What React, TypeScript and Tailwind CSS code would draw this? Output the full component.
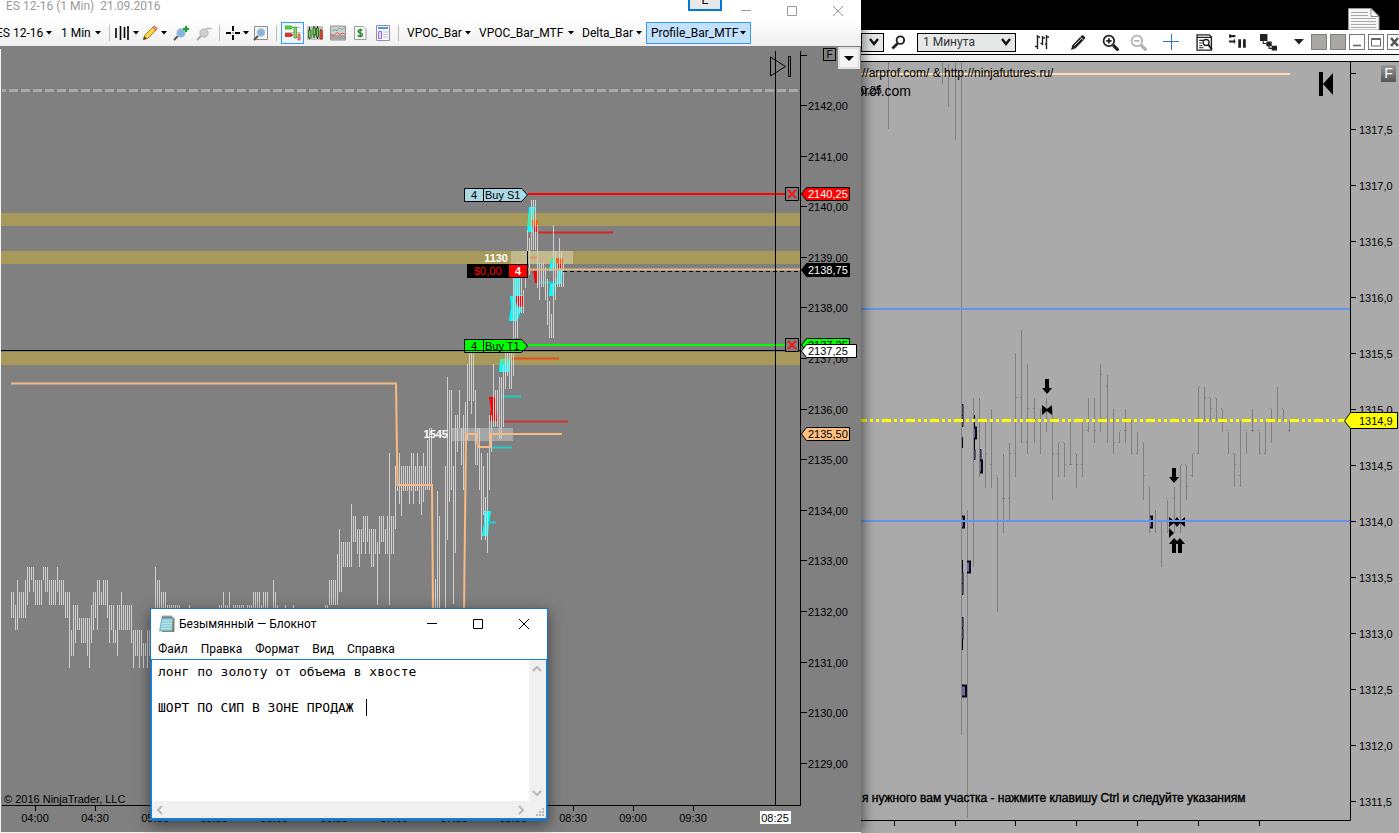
import React from 'react';

type Bar = [number, number, number];

const UI_FONT = "font-['Roboto','Open_Sans',sans-serif]";
const CHART_FONT = "font-['Liberation_Sans',Arial,sans-serif]";

// ES bars before the rally, as tick levels: [x, high, low], one level = a quarter point
const esLevels: Bar[] = [
  [11, 2, 4], [13, 2, 4], [15, 3, 5], [17, 1, 5], [19, 2, 4], [21, 2, 4], [23, 2, 4], [25, 1, 4],
  [27, 0, 3], [29, 0, 2], [31, 0, 1], [33, 0, 2], [35, 1, 3], [37, 1, 3], [39, 1, 3], [41, 1, 3],
  [43, 0, 1], [45, 0, 2], [47, 0, 2], [49, 1, 3], [51, 1, 3], [53, 1, 3], [55, 1, 3], [57, 0, 2],
  [59, 1, 3], [61, 1, 3], [63, 1, 3], [65, 2, 4], [67, 2, 4], [69, 2, 8], [71, 5, 7], [73, 3, 7],
  [75, 3, 6], [77, 3, 5], [79, 4, 5], [81, 4, 6], [83, 4, 6], [85, 4, 6], [87, 4, 7], [89, 4, 8],
  [91, 3, 6], [93, 2, 5], [95, 2, 4], [97, 1, 5], [99, 1, 3], [101, 2, 3], [103, 1, 3], [105, 1, 3],
  [107, 1, 4], [109, 3, 6], [111, 3, 5], [113, 3, 6], [115, 5, 6], [117, 3, 7], [119, 3, 5], [121, 2, 5],
  [123, 3, 5], [125, 3, 5], [127, 3, 5], [129, 3, 5], [131, 3, 6], [133, 5, 8], [135, 5, 7], [137, 5, 7],
  [139, 5, 8], [141, 5, 7], [143, 6, 8], [145, 6, 7], [147, 5, 8], [149, 5, 7], [155, 0, 4], [157, 1, 4],
  [159, 1, 4], [161, 2, 4], [163, 2, 4], [165, 2, 4], [167, 3, 4], [169, 3, 4], [171, 3, 4], [173, 3, 4],
  [175, 3, 4], [177, 3, 4], [179, 3, 4], [189, 3, 4], [219, 3, 4], [221, 3, 4], [223, 2, 4], [225, 3, 4],
  [227, 3, 4], [229, 2, 4], [233, 3, 4], [235, 3, 4], [237, 3, 4], [239, 3, 4], [241, 3, 4], [243, 3, 4],
  [247, 3, 4], [249, 3, 4], [251, 3, 4], [253, 2, 4], [255, 2, 4], [257, 2, 4], [259, 2, 4], [261, 3, 4],
  [263, 2, 4], [265, 2, 4], [267, 2, 4], [273, 1, 4], [275, 2, 4], [277, 3, 4], [285, 3, 4], [293, 3, 4],
  [325, 3, 4], [327, 3, 4], [329, 1, 3], [331, 1, 3], [333, 1, 3], [335, 1, 3], [337, -1, 3], [339, -3, 2],
  [341, -2, 2], [343, -2, 0], [345, -2, 0], [347, -2, 0], [349, -2, 0], [351, -5, 0], [353, -4, -2], [355, -4, -2],
  [357, -3, -1], [359, -3, 0], [361, -3, -1], [363, -4, -2], [365, -4, -1], [367, -4, -2], [369, -3, -1], [371, -3, 0],
  [373, -3, 0], [375, -3, -1], [377, -2, 3], [379, -4, -1], [381, -4, -2], [383, -4, -2], [385, -3, -1], [387, -4, -1],
  [389, -9, 3], [391, -4, -1], [393, -4, -1], [395, -8, -3], [397, -8, -6], [399, -9, -5], [401, -8, -4], [403, -8, -6],
  [405, -8, -6], [407, -8, -6], [409, -8, -5], [411, -9, -6], [413, -9, -5], [415, -8, -6], [417, -9, -6], [419, -8, -5],
];

// bars of the rally itself, in chart pixels
const esBars: Bar[] = [
  [421, 466, 515], [423, 453, 502], [425, 466, 490], [427, 440, 490], [429, 428, 490], [431, 428, 490], [433, 592, 612], [435, 579, 612],
  [437, 491, 612], [439, 516, 612], [445, 466, 612], [447, 377, 540], [449, 390, 502], [451, 390, 490], [453, 466, 604], [455, 415, 553],
  [457, 415, 452], [459, 390, 428], [461, 428, 465], [463, 415, 490], [465, 402, 437], [467, 364, 440], [469, 353, 401], [471, 353, 414],
  [473, 353, 401], [475, 390, 465], [477, 428, 465], [479, 428, 490], [481, 453, 540], [483, 466, 515], [485, 497, 540], [487, 453, 553],
  [489, 415, 490], [491, 415, 452], [493, 364, 427], [495, 390, 427], [497, 390, 427], [499, 377, 439], [501, 377, 439], [503, 365, 427],
  [505, 353, 389], [507, 353, 376], [509, 352, 389], [511, 352, 389], [513, 278, 376], [515, 278, 338], [517, 263, 338], [519, 265, 313],
  [521, 275, 313], [523, 290, 313], [525, 263, 288], [527, 230, 267], [529, 238, 275], [531, 200, 250], [533, 200, 250], [535, 200, 250],
  [537, 225, 288], [539, 263, 300], [541, 263, 287], [543, 263, 287], [545, 267, 300], [547, 279, 325], [549, 301, 338], [551, 314, 338],
  [553, 225, 338], [555, 251, 300], [557, 263, 287], [559, 238, 287], [561, 251, 287], [563, 263, 287],
];

const gcBars: Bar[] = [
  [888, 62, 129], [942, 62, 84], [948, 64, 107], [955, 62, 140], [961, 62, 735], [967, 510, 818], [973, 398, 567], [979, 398, 477],
  [985, 422, 488], [991, 409, 488], [997, 477, 612], [1003, 454, 533], [1009, 443, 520], [1015, 353, 477], [1021, 330, 443], [1027, 364, 454],
  [1034, 398, 443], [1040, 409, 454], [1046, 398, 432], [1052, 409, 500], [1058, 443, 477], [1064, 443, 477], [1070, 421, 465], [1076, 454, 488],
  [1082, 421, 477], [1088, 398, 432], [1094, 398, 443], [1100, 364, 432], [1107, 375, 443], [1113, 409, 454], [1119, 432, 443], [1125, 409, 443],
  [1131, 420, 454], [1137, 432, 454], [1143, 443, 500], [1149, 487, 533], [1155, 510, 533], [1161, 521, 567], [1167, 500, 533], [1174, 487, 533],
  [1180, 465, 533], [1186, 465, 500], [1192, 454, 477], [1198, 387, 454], [1204, 387, 421], [1210, 398, 421], [1216, 398, 421], [1222, 409, 432],
  [1228, 432, 454], [1234, 454, 487], [1240, 421, 487], [1246, 432, 454], [1252, 409, 432], [1259, 432, 454], [1265, 421, 454], [1271, 409, 443],
  [1277, 387, 421], [1283, 409, 421], [1289, 421, 432],
];

// open and close stubs of the gold bars: [x, y]
const gcOpens = [
  [991, 465], [997, 476], [1003, 499], [1009, 499], [1015, 454], [1021, 398], [1027, 443], [1034, 409], [1040, 420], [1058, 454],
  [1064, 443], [1070, 465], [1076, 454], [1082, 465], [1088, 431], [1107, 387], [1119, 443], [1125, 431], [1137, 454], [1143, 443],
  [1149, 487], [1167, 499], [1174, 499], [1186, 465], [1192, 476], [1198, 454], [1210, 398], [1216, 398], [1222, 409], [1228, 431],
  [1234, 454], [1240, 476], [1246, 431], [1252, 431], [1259, 431], [1265, 454], [1271, 409], [1283, 409], [1289, 431],
];
const gcCloses = [
  [985, 454], [1003, 499], [1009, 454], [1015, 398], [1021, 443], [1027, 409], [1034, 420], [1052, 454], [1058, 443], [1064, 465],
  [1070, 465], [1076, 465], [1094, 431], [1100, 375], [1113, 443], [1119, 431], [1125, 431], [1131, 454], [1143, 476], [1149, 532],
  [1155, 532], [1180, 465], [1186, 487], [1192, 454], [1198, 387], [1204, 398], [1210, 409], [1234, 465], [1252, 431], [1259, 454],
];

// volume blocks on the gold chart: [x, y, width, height]
const gcVolume = [
  [962, 404, 1, 11], [962, 415, 1, 11], [974, 427, 2, 11], [974, 449, 1, 10], [980, 449, 1, 11], [980, 460, 2, 12],
  [962, 516, 2, 11], [967, 561, 3, 11], [962, 572, 1, 11], [962, 583, 1, 11], [962, 617, 1, 10], [962, 628, 1, 11],
  [962, 685, 4, 11], [1150, 516, 2, 11],
];

const barsPath = (bars: Bar[]) => bars.map(([x, y1, y2]) => `M${x + 0.5} ${y1}V${y2}`).join('');
const levelY = (level: number) => Math.round(567 + level * 12.65);

const Caret = ({ className = '' }: { className?: string }) => (
  <svg width="7" height="4" viewBox="0 0 7 4" className={className} aria-hidden="true">
    <path d="M0 0h6L3 3.5z" fill="#000" />
  </svg>
);

const Separator = () => <span className="mx-1 h-4 w-px shrink-0 bg-[#bdbdbd]" />;

const ToolButton = ({ label, children, className = '' }: { label: string; children: React.ReactNode; className?: string }) => (
  <button type="button" aria-label={label} className={`flex h-[22px] shrink-0 items-center justify-center ${className}`}>
    {children}
  </button>
);

const TextMenu = ({ label, className = '' }: { label: string; className?: string }) => (
  <button type="button" className={`flex h-[22px] shrink-0 items-center justify-between whitespace-nowrap pr-[3px] ${className}`}>
    {label}
    <Caret />
  </button>
);

const Icon = ({ children, size = 16 }: { children: React.ReactNode; size?: number }) => (
  <svg width={size} height={size} viewBox="0 0 16 16" fill="none" className="shrink-0" aria-hidden="true">
    {children}
  </svg>
);

const LeftToolbar = () => (
  <div className={`flex h-[26px] items-center overflow-hidden bg-linear-to-b from-white to-[#efefef] text-xs text-black ${UI_FONT}`}>
    <TextMenu label="ES 12-16" className="-ml-1 w-[60px]" />
    <TextMenu label="1 Min" className="w-[49px] pl-[5px]" />
    <Separator />
    <ToolButton label="Chart style" className="w-[26px] gap-[3px]">
      <Icon>
        <path d="M2 3v10M6.500 1v14M10.500 2v11M14 1v14" stroke="#000" strokeWidth="1.600" />
      </Icon>
      <Caret />
    </ToolButton>
    <ToolButton label="Drawing tools" className="w-[30px] gap-[3px]">
      <Icon>
        <path d="M1.500 14.500l1-4L12 1l3 3-9.500 9.500z" fill="#ffd84a" stroke="#b07b17" />
        <path d="M10.500 2.500L12.500.7l2.700 2.700-1.800 1.800z" fill="#ef8f86" stroke="#b06058" strokeWidth=".6" />
        <path d="M1 15l1.500-4 2.500 2.500z" fill="#5a4632" />
      </Icon>
      <Caret />
    </ToolButton>
    <ToolButton label="Zoom in" className="w-[22px]">
      <Icon>
        <path d="M1 15l4.500-4.500" stroke="#555" strokeWidth="2" />
        <circle cx="8" cy="8" r="4" fill="#7fb2e2" stroke="#a9bccb" strokeWidth="1.400" />
        <path d="M13 1v6M10 4h6" stroke="#0fa62a" strokeWidth="2" />
      </Icon>
    </ToolButton>
    <ToolButton label="Zoom out" className="w-[23px]">
      <Icon>
        <path d="M1 15l4.500-4.500" stroke="#aaa" strokeWidth="2" />
        <circle cx="8" cy="8" r="4" fill="#cfcfcf" stroke="#c0c0c0" strokeWidth="1.400" />
        <path d="M10.500 3.500h5" stroke="#b5b5b5" strokeWidth="1.500" />
      </Icon>
    </ToolButton>
    <Separator />
    <ToolButton label="Cross hair" className="w-[26px] gap-[2px]">
      <Icon>
        <path d="M8 1v5M8 10v5M1 8h5M10 8h5" stroke="#000" strokeWidth="2" />
        <path d="M7.500 7.500h1v1h-1z" fill="#000" />
      </Icon>
      <Caret />
    </ToolButton>
    <ToolButton label="Data box" className="w-[22px]">
      <Icon>
        <path d="M1.500 1.500h13v13h-13z" fill="#f4f4f4" stroke="#8d8d8d" />
        <path d="M1 15l4-4" stroke="#555" strokeWidth="2" />
        <circle cx="8" cy="7.500" r="3.500" fill="#7fb2e2" stroke="#a9bccb" strokeWidth="1.400" />
      </Icon>
    </ToolButton>
    <Separator />
    <ToolButton label="Chart trader" className="w-[23px] border border-[#3399ff] bg-[#eef5fc]">
      <Icon>
        <path d="M8 2.500h7M0 7.500h16M9 12.500h7" stroke="#aeb4b8" strokeWidth=".8" />
        <path d="M0 1h6l2 1.500L6 4H0z" fill="#55dd28" stroke="#38931c" strokeWidth=".7" />
        <path d="M0 8.500h6l2 1.500-2 1.500H0z" fill="#f32b1f" stroke="#a8241c" strokeWidth=".7" />
        <path d="M9 2h2.500v11H9z" fill="#8bd85b" stroke="#3f8a2a" strokeWidth=".7" />
        <path d="M13 9h2v6h-2z" fill="#f88f86" stroke="#d0392f" strokeWidth=".7" />
      </Icon>
    </ToolButton>
    <ToolButton label="Strategies" className="w-[22px]">
      <Icon>
        <path d="M0 1h16v14H0z" fill="#c2c2c2" />
        <path d="M2.500 2v12M7 1v12M10.500 1v13M14 4v10" stroke="#222" />
        <path d="M1.500 5h2.500v8H1.500zM6 3h2.500v7H6z" fill="#6ed544" stroke="#20571a" strokeWidth=".8" />
        <path d="M9.500 3h2v9h-2z" fill="#6ed544" stroke="#20571a" strokeWidth=".8" />
        <path d="M13 5.500h2.300V14H13z" fill="#ee5046" stroke="#8f2520" strokeWidth=".8" />
      </Icon>
    </ToolButton>
    <ToolButton label="Indicators" className="w-[23px]">
      <Icon>
        <path d="M.5 1h15v14H.5z" fill="#cfcfcf" stroke="#929292" />
        <path d="M1 10h14v4.500H1z" fill="#a3a3a3" />
        <path d="M2 6l3-1.500L7 6l2.500-3 2 1.500L15 3" stroke="#5fb594" />
        <path d="M1 9.500l3 1 3-3 3 2 2-1.500 3 1" stroke="#ef5757" />
      </Icon>
    </ToolButton>
    <ToolButton label="Account" className="w-[22px]">
      <Icon>
        <path d="M2.500 1.500h8.500l3 3v10H2.500z" fill="#fff" stroke="#9a9a9a" />
        <path d="M10.500 5.500C9.500 4.300 6 4.300 6 6.200 6 8.300 10.600 7.500 10.600 9.800c0 2-3.700 2.200-5 .5M8.200 3.500v9" stroke="#2c8b2c" strokeWidth="1.500" />
      </Icon>
    </ToolButton>
    <ToolButton label="Properties" className="w-[23px]">
      <Icon>
        <path d="M1.500.5h13v15h-13z" fill="#f4f4fa" stroke="#8f8fa5" />
        <path d="M3 2h10v2H3z" fill="#4d98dc" />
        <path d="M3.500 6.500h3v7h-3z" fill="#eadcff" stroke="#9b63ff" />
        <path d="M8 7h5M8 9.500h5M8 12h5" stroke="#cacad3" />
      </Icon>
    </ToolButton>
    <Separator />
    <TextMenu label="VPOC_Bar" className="w-[72px] pl-1" />
    <TextMenu label="VPOC_Bar_MTF" className="w-[103px] pl-1" />
    <TextMenu label="Delta_Bar" className="w-[68px] pl-1" />
    <TextMenu label="Profile_Bar_MTF" className="w-[105px] border border-[#3399ff] bg-[#c2e0ff] pl-1" />
  </div>
);

const OrderTag = ({ y, text, fill }: { y: number; text: string; fill: string }) => (
  <g>
    <path d={`M464.500 ${y - 6.5}H521.500L527.500 ${y}L521.500 ${y + 6.5}H464.500z`} fill={fill} stroke="#000" />
    <path d={`M483.500 ${y - 6.5}v13`} stroke="#000" />
    <text x="471" y={y + 4}>4</text>
    <text x="485" y={y + 4}>{text}</text>
    <path d={`M785.500 ${y - 7.5}h13v13h-13z`} fill="#808080" stroke="#000" />
    <path d={`M788 ${y - 5}l8 8m0-8l-8 8`} stroke="#f01818" strokeWidth="2" />
  </g>
);

const PriceTag = ({ y, text, fill, color = '#000', right = 850 }: { y: number; text: string; fill: string; color?: string; right?: number }) => (
  <g>
    <path d={`M801.500 ${y}l5-6.500H${right - 0.5}v13H806.500z`} fill={fill} stroke="#000" />
    <text x="808" y={y + 4} fill={color}>{text}</text>
  </g>
);

const EsChart = () => {
  const prices = Array.from({ length: 14 }, (_, i) => 2142 - i);
  const times = ['04:00', '04:30', '05:00', '05:30', '06:00', '06:30', '07:00', '07:30', '08:00', '08:30', '09:00', '09:30'];

  return (
    <svg viewBox="0 46 861 787" preserveAspectRatio="xMinYMin slice" className={`block h-full w-full bg-[#808080] text-[11px] ${CHART_FONT}`}>
      <path d="M.5 49V833M0 832.500H861" stroke="#f4f4f4" />
      <path d="M1 213h799v13H1zM1 251h799v13H1zM1 352h799v13H1z" fill="#a6995a" />
      <path d="M2 90.500H800" stroke="#a9a9a9" strokeWidth="3" strokeDasharray="9 3" strokeDashoffset="5" />

      <path d="M511 251h62v13h-62z" fill="#c3ba8c" />
      <path d="M451 428h62v13h-62z" fill="#a6a6a6" />

      {/* order flow clusters */}
      <path
        d="M529 207h6l-2 13 0 12h-6zM514 278h6v17l4 1-1 10-6 15h-8l2-14-1-11h3zM551 258h5l-2 13h-5zM550 283h5l-1 13h-5zM558 268h5l-2 16h-5zM500 359h9v13h-10zM484 511h7l-2 12-1 13h-6l2-13z"
        fill="#00ffff"
      />
      <path
        d="M532 220h6v12h-5zM515 296h8l1 11h-7zM533 271h5v12h-3zM557 258h6l-1 12h-4zM489 397h7v12l1 12h-8l2-12z"
        fill="#ff0000"
      />
      <path d="M529 213h4v13h-5zM551 258h4v6h-4zM500 359h8v5h-8z" fill="#4de8a0" />
      <path d="M531 220h7v6h-7zM556 258h7v6h-7z" fill="#ff5a10" />
      <path d="M529 257.500h8" stroke="#e09468" strokeWidth="2" />
      <path d="M502 396.500h19M491 447.500h21M487 522.500h9M539 282.500h14" stroke="#22cccc" strokeWidth="2" />
      <path d="M537 232.500h76" stroke="#d92424" strokeWidth="2" />
      <path d="M512 358.500h47" stroke="#ec4a14" strokeWidth="2" />
      <path d="M504 421.500h64" stroke="#c73333" strokeWidth="2" />

      <g stroke="#d0d0d0">
        <path d={barsPath(esLevels.map(([x, a, b]) => [x, levelY(a), levelY(b)] as Bar))} />
        <path d={barsPath(esBars)} />
      </g>

      <path d="M11 383.500H396L397.500 485H432l1 127M464 612L466 434h10l2 13h12l1-13h71" fill="none" stroke="#f8ba82" strokeWidth="2" />
      <path d="M528 269.500H800" stroke="#deb887" strokeWidth="2" />
      <path d="M563 271.500H800" stroke="#000" strokeDasharray="4 3" />
      <path d="M527.500 251v14M1 350.500H801" stroke="#000" />
      <path d="M528 194H785" stroke="#ff0000" strokeWidth="2" />
      <path d="M528 345H785" stroke="#00ff00" strokeWidth="2" />
      <path d="M2 805.500H800.500V51M775.500 51V805" fill="none" stroke="#000" />

      <OrderTag y={195} text="Buy S1" fill="#add8e6" />
      <OrderTag y={346} text="Buy T1" fill="#00ff00" />
      <path d="M464 350.500h64" stroke="#000" />
      <path d="M467 264h61v14h-61z" fill="#000" />
      <path d="M509 265h18v12h-18z" fill="#ff0000" />
      <text x="474" y="275" fill="#ff0000">$0,00</text>
      <text x="515" y="275" fill="#fff" className="font-bold">4</text>
      <text x="508" y="262" textAnchor="end" fill="#fff" className="font-bold">1130</text>
      <text x="448" y="438" textAnchor="end" fill="#fff" className="font-bold">1545</text>

      {prices.map((price, i) => {
        const y = Math.round(105 + i * 50.6);
        return (
          <g key={price}>
            <path d={`M801 ${y + 0.5}h6`} stroke="#000" />
            <text x="808" y={y + 5}>{`${price},00`}</text>
          </g>
        );
      })}
      <path d="M801 55.500h6" stroke="#000" />
      {times.map((time, i) => {
        const x = Math.round(35 + i * 59.8);
        return (
          <g key={time}>
            <path d={`M${x + 0.5} 806v5`} stroke="#000" />
            <text x={x} y="822" textAnchor="middle">{time}</text>
          </g>
        );
      })}
      <path d="M760 811h31v13h-31z" fill="#fff" />
      <text x="775" y="822" textAnchor="middle">08:25</text>
      <text x="4" y="803">© 2016 NinjaTrader, LLC</text>

      <PriceTag y={194} text="2140,25" fill="#ff0000" color="#fff" />
      <PriceTag y={270} text="2138,75" fill="#000" color="#fff" />
      <PriceTag y={345} text="2137,25" fill="#00ff00" />
      <PriceTag y={351} text="2137,25" fill="#fff" right={857} />
      <PriceTag y={434} text="2135,50" fill="#ffc080" />
      <path d="M770.500 57v19l15-9.500zM788.500 56.500h2v20h-2z" fill="none" stroke="#000" />
    </svg>
  );
};

const EsWindow = () => (
  <section className="relative z-10 flex min-w-0 flex-col bg-white shadow-[2px_0_12px_rgba(0,0,0,0.55)]">
    <header className={`relative flex h-5 items-start justify-between overflow-hidden bg-white text-xs text-[#999] ${UI_FONT}`}>
      <h1 className="-mt-[3px] whitespace-pre pl-[6px] leading-[18px]">ES 12-16 (1 Min)  21.09.2016</h1>
      <div className="flex h-3 items-start">
        <button type="button" className="mr-px flex h-[11px] w-[34px] items-start justify-center border-2 border-t-0 border-[#0078d7] bg-[#e8e8e8] text-black">
          <span className="-mt-[6px] leading-[12px]">E</span>
        </button>
        <ToolButton label="Minimize" className="h-3 w-[46px]">
          <svg width="10" height="10" viewBox="0 0 10 10"><path d="M0 4.500h10" stroke="#999" /></svg>
        </ToolButton>
        <ToolButton label="Maximize" className="h-3 w-[46px]">
          <svg width="10" height="10" viewBox="0 0 10 10"><path d="M.5.5h9v9h-9z" fill="none" stroke="#999" /></svg>
        </ToolButton>
        <ToolButton label="Close" className="h-3 w-[46px]">
          <svg width="10" height="10" viewBox="0 0 10 10"><path d="M0 0l10 10M10 0L0 10" stroke="#999" /></svg>
        </ToolButton>
      </div>
    </header>
    <LeftToolbar />
    <div className="relative min-h-0 flex-1">
      <EsChart />
      <div className={`absolute right-px top-px flex items-start gap-[2px] ${CHART_FONT}`}>
        <button type="button" className="mt-px h-[13px] w-[13px] border border-black text-[10px] leading-[11px]">F</button>
        <button type="button" aria-label="Chart menu" className="flex h-[22px] w-[22px] items-center justify-center border-2 border-[#e0e0e0] bg-[#f4f4f4]">
          <svg width="10" height="5" viewBox="0 0 10 5"><path d="M0 0h10L5 5z" /></svg>
        </button>
      </div>
    </div>
  </section>
);

const RightSelect = ({ label, value, className }: { label: string; value: string; className: string }) => (
  <label className={`relative block h-[19px] shrink-0 ${className}`} aria-label={label}>
    <select aria-label={label} className="block h-full w-full appearance-none border border-black bg-[#e6e8e8] pl-[5px] text-xs leading-[17px] text-[#333]">
      <option>{value}</option>
    </select>
    <svg width="10" height="8" viewBox="0 0 10 8" className="pointer-events-none absolute right-[5px] top-[5px]">
      <path d="M1 1l4 5 4-5" fill="none" stroke="#111" strokeWidth="2.400" />
    </svg>
  </label>
);

const RightToolbar = () => (
  <div className={`flex h-[25px] shrink-0 items-center overflow-hidden border-b border-black bg-white ${UI_FONT}`}>
    <RightSelect label="Инструмент" value="" className="w-[23px]" />
    <ToolButton label="Поиск" className="w-[33px] pr-1">
      <Icon size={15}>
        <circle cx="10" cy="5.500" r="4" stroke="#222" strokeWidth="2" />
        <path d="M7 9l-5.500 5.500" stroke="#222" strokeWidth="3" />
      </Icon>
    </ToolButton>
    <RightSelect label="Период" value="1 Минута" className="w-[99px]" />
    <ToolButton label="Тип графика" className="ml-2 w-9">
      <Icon>
        <path d="M3.500 1v14M1 12.500h2M3.500 3H6M8.500 2v9M6.500 9.500h2M8.500 4H11M12.500 1v14M11 10h1.500M12.500 3H15" stroke="#222" strokeWidth="1.400" />
      </Icon>
    </ToolButton>
    <ToolButton label="Рисование" className="w-9">
      <Icon size={17}>
        <path d="M1 15l1.200-4.500L11 1.500c1-1 4 1.500 3 3L5.300 13.500z" fill="#222" />
        <path d="M4 11l7-7" stroke="#ddd" strokeWidth=".9" />
        <path d="M10 3l3 3" stroke="#fff" strokeWidth=".7" />
      </Icon>
    </ToolButton>
    <ToolButton label="Увеличить" className="w-7">
      <Icon size={17}>
        <circle cx="6.500" cy="6.500" r="5" stroke="#222" strokeWidth="1.600" />
        <path d="M10.500 10.500l5 5" stroke="#222" strokeWidth="3" />
        <path d="M6.500 4v5M4 6.500h5" stroke="#222" strokeWidth="1.600" />
      </Icon>
    </ToolButton>
    <ToolButton label="Уменьшить" className="w-7">
      <Icon size={17}>
        <circle cx="6.500" cy="6.500" r="5" stroke="#b0b0b0" strokeWidth="1.600" />
        <path d="M10.500 10.500l5 5" stroke="#b0b0b0" strokeWidth="3" />
        <path d="M4 6.500h5" stroke="#b0b0b0" strokeWidth="1.600" />
      </Icon>
    </ToolButton>
    <ToolButton label="Перекрестие" className="w-[38px]">
      <Icon>
        <path d="M8.500 0v16M0 7.500h16" stroke="#2b78b8" />
      </Icon>
    </ToolButton>
    <ToolButton label="Окно данных" className="w-7">
      <Icon size={17}>
        <path d="M1 .8h11.500l2 2v12.400H1zM1 3.200h13" stroke="#222" strokeWidth="1.300" />
        <path d="M3 6h4M3 8.500h2.500M3 11h3M3 13h4" stroke="#222" />
        <circle cx="9.500" cy="8" r="2.800" stroke="#222" strokeWidth="1.300" />
        <path d="M11.500 10l3.500 4.500" stroke="#222" strokeWidth="1.800" />
      </Icon>
    </ToolButton>
    <ToolButton label="Стратегии" className="w-[38px]">
      <Icon size={17}>
        <path d="M0 2h6M0 7h6" stroke="#222" strokeWidth="2" />
        <path d="M1 0v4M5 5v4" stroke="#222" />
        <path d="M10 5v8M14.500 5v8" stroke="#222" strokeWidth="2.600" />
      </Icon>
    </ToolButton>
    <ToolButton label="Свойства" className="w-[26px] pr-[2px]">
      <Icon size={17}>
        <path d="M0 0h7v6.500H0zM6 7h5v4.500H6zM11 11h5v4.500h-5z" fill="#222" />
        <path d="M3 6.500v2.500h3M8.500 11v2.500h3" stroke="#222" />
      </Icon>
    </ToolButton>
    <ToolButton label="Ещё" className="w-[29px] pl-1">
      <svg width="10" height="6" viewBox="0 0 10 6"><path d="M0 0h10L5 5.500z" fill="#222" /></svg>
    </ToolButton>
    <div className="flex shrink-0 gap-[3px]">
      <button type="button" aria-label="Связь инструмента" className="h-4 w-4 border border-[#808080] bg-[#aba6a6]" />
      <button type="button" aria-label="Связь интервала" className="h-4 w-4 border border-[#808080] bg-[#aba6a6]" />
      <button type="button" aria-label="Свернуть" className="h-4 w-4 border border-[#777]">
        <svg viewBox="0 0 14 14"><path d="M3 10.500h8" stroke="#666" strokeWidth="1.600" /></svg>
      </button>
      <button type="button" aria-label="Развернуть" className="h-4 w-4 border border-[#777]">
        <svg viewBox="0 0 14 14"><path d="M2.500 3.500h9v7.500h-9zM2.500 4.500h9" fill="none" stroke="#666" /></svg>
      </button>
      <button type="button" aria-label="Закрыть" className="h-4 w-4 border border-[#777]">
        <svg viewBox="0 0 14 14"><path d="M3 3l7 8M10 3l-7 8" stroke="#555" strokeWidth="2.600" /></svg>
      </button>
    </div>
  </div>
);

const GcChart = () => {
  const prices = ['1317,5', '1317,0', '1316,5', '1316,0', '1315,5', '1315,0', '1314,5', '1314,0', '1313,5', '1313,0', '1312,5', '1312,0', '1311,5'];

  return (
    <svg viewBox="861 62 538 771" preserveAspectRatio="xMinYMin slice" className={`block h-full w-full bg-[#aaaaaa] text-[11px] ${CHART_FONT}`}>
      <path d="M861 74H1290" stroke="#ffdead" strokeWidth="2" />
      <path d={barsPath(gcBars)} stroke="#808080" />
      <path
        d={gcOpens.map(([x, y]) => `M${x - 1} ${y - 0.5}h1`).join('') + gcCloses.map(([x, y]) => `M${x + 1} ${y - 0.5}h1`).join('')}
        stroke="#808080"
      />
      {gcVolume.map(([x, y, w, h]) => (
        <path key={`${x}-${y}`} d={`M${x} ${y + 0.5}h${w}v${h}h${-w}`} fill="#6b6b9c" stroke="#0a0a18" strokeWidth={w > 1 ? 2 : 1} />
      ))}
      <path d="M962.500 437v11M962.500 560v12M974.500 415v12M962.500 639v11M974.500 438v11" stroke="#000" />
      <path d="M861 309H1350M861 521H1350" stroke="#6495ed" strokeWidth="2" />
      <path d="M861 420.500H1345" stroke="#ffff00" strokeWidth="3" strokeDasharray="9 3 3 3 3 3" strokeDashoffset="3" />

      <g fill="#000">
        <path d="M1045 379h4v9h3l-5 6-5-6h3zM1172 468h4v9h3l-5 6-5-6h3z" />
        <path d="M1042 405l5 4 5-4v10l-5-4-5 4z" />
        <path d="M1169 517l5 4 3-4 3 4 5-4v10l-5-4-3 4-3-4-5 4zM1169 528l5 5-5 5z" />
        <path d="M1172 553v-9h-3l5-6 3 3 3-3 5 6h-3v9h-4v-9h-2v9z" />
        <path d="M1319 72h4v24h-4zM1333 73v22l-10-11z" />
      </g>
      <path d="M1167 521h20" stroke="#6495ed" strokeWidth="2" />

      <path d="M861 820.500H1350.500V62M1350 73.500h6" fill="none" stroke="#000" />
      {[894, 955, 1015, 1076, 1137, 1198, 1259].map((x) => (
        <path key={x} d={`M${x + 0.5} 821v5`} stroke="#000" />
      ))}
      {prices.map((price, i) => (
        <g key={price}>
          <path d={`M1351 ${129.5 + i * 56}h5`} stroke="#000" />
          <text x="1359" y={134 + i * 56}>{price}</text>
        </g>
      ))}
      <path d="M1344.500 421l6-8.500H1397.500v16H1350.500z" fill="#ffff00" stroke="#000" />
      <text x="1359" y="425">1314,9</text>

      <text x="862" y="77" className="text-[12px]">//arprof.com/ &amp; http://ninjafutures.ru/</text>
      <text x="911" y="96" textAnchor="end" className="text-[14px]">prof.com</text>
      <text x="882" y="94" textAnchor="end">0,25</text>
      <text x="862" y="802" className="text-[12px]" stroke="#000" strokeWidth="0.4">
        я нужного вам участка - нажмите клавишу Ctrl и следуйте указаниям
      </text>
    </svg>
  );
};

const GcWindow = () => (
  <section className="flex min-w-0 flex-col overflow-hidden bg-black">
    <div className="flex h-[30px] shrink-0 items-end justify-end pr-[19px]">
      <svg width="32" height="22" viewBox="0 0 32 22" aria-hidden="true">
        <path d="M.5 22V.5H23l8 8V22z" fill="#f6f6f6" stroke="#999" />
        <path d="M23 .5v8h8z" fill="#fff" stroke="#888" />
        <path d="M3 4.500h17M3 7.500h17M3 10.500h25M3 13.500h25M3 16.500h25M3 19.500h25" stroke="#a8a8a8" />
      </svg>
    </div>
    <RightToolbar />
    <div className="h-[7px] shrink-0 border-b border-black bg-[#f1f1f1]" />
    <div className="relative min-h-0 flex-1">
      <GcChart />
      <button type="button" className={`absolute right-[3px] top-[3px] h-[17px] w-[15px] bg-linear-to-b from-[#999] to-[#555] text-sm leading-[17px] text-white ${CHART_FONT}`}>
        F
      </button>
    </div>
  </section>
);

const ScrollArrow = ({ d, label }: { d: string; label: string }) => (
  <button type="button" aria-label={label} className="flex h-4 w-4 items-center justify-center">
    <svg width="10" height="10" viewBox="0 0 10 10"><path d={d} fill="none" stroke="#b8b8b8" strokeWidth="2" /></svg>
  </button>
);

const Notepad = () => (
  <section className="absolute left-[150px] top-[608px] z-20 flex h-[213px] w-[398px] flex-col border border-b-2 border-[#1a74c0] bg-white shadow-[0_4px_14px_rgba(0,0,0,0.5)]">
    <header className={`flex h-[29px] items-center text-xs text-black ${UI_FONT}`}>
      <svg width="16" height="18" viewBox="0 0 16 18" className="ml-2 shrink-0" aria-hidden="true">
        <path d="M4 3h11.500v14H3z" fill="#8a7a5c" />
        <path d="M3 2h11l-1 14H.5z" fill="#8ecfdb" stroke="#5a9fae" strokeWidth=".7" />
        <path d="M3.500 6H13M3 8.500h10M2.800 11h10M2.500 13.500h10" stroke="#c6e8ee" strokeWidth=".8" />
        <path d="M4 .5v3M6 .5v3M8 .5v3M10 .5v3M12 .5v3" stroke="#4a4a4a" strokeWidth=".9" />
      </svg>
      <h2 className="ml-1 flex-1 whitespace-nowrap">Безымянный — Блокнот</h2>
      <ToolButton label="Свернуть" className="w-[46px]">
        <svg width="10" height="10" viewBox="0 0 10 10"><path d="M0 4.500h10" stroke="#000" /></svg>
      </ToolButton>
      <ToolButton label="Развернуть" className="w-[46px]">
        <svg width="10" height="10" viewBox="0 0 10 10"><path d="M.5.5h9v9h-9z" fill="none" stroke="#000" /></svg>
      </ToolButton>
      <ToolButton label="Закрыть" className="w-[46px]">
        <svg width="10" height="10" viewBox="0 0 10 10"><path d="M0 0l10 10M10 0L0 10" stroke="#000" /></svg>
      </ToolButton>
    </header>
    <nav className={`flex h-[21px] items-center gap-[13px] pl-[7px] text-xs text-black ${UI_FONT}`}>
      {['Файл', 'Правка', 'Формат', 'Вид', 'Справка'].map((item) => (
        <button key={item} type="button">{item}</button>
      ))}
    </nav>
    <div className="relative grid min-h-0 flex-1 grid-cols-[1fr_17px] grid-rows-[1fr_17px] border border-[#1a80d9] bg-[#f0f0f0]">
      <textarea
        aria-label="Текст"
        wrap="off"
        spellCheck={false}
        defaultValue={'лонг по золоту от объема в хвосте\n\nШОРТ ПО СИП В ЗОНЕ ПРОДАЖ '}
        className="h-full w-full resize-none overflow-hidden bg-white px-[6px] pt-[3px] font-['DejaVu_Sans_Mono',monospace] text-[13px] leading-[18px] text-black outline-none"
      />
      <span className="absolute left-[214px] top-[39px] h-[17px] w-px bg-black" />
      <div className="flex flex-col items-start justify-between pt-px">
        <ScrollArrow label="Вверх" d="M1 7l4-4 4 4" />
        <ScrollArrow label="Вниз" d="M1 3l4 4 4-4" />
      </div>
      <div className="flex items-center justify-between">
        <ScrollArrow label="Влево" d="M7 1L3 5l4 4" />
        <ScrollArrow label="Вправо" d="M3 1l4 4-4 4" />
      </div>
      <svg width="10" height="10" viewBox="0 0 10 10" className="self-end justify-self-end" aria-hidden="true">
        <path d="M6 0h2v2H6zM3 3h2v2H3zM6 3h2v2H6zM0 6h2v2H0zM3 6h2v2H3zM6 6h2v2H6z" fill="#b8b8b8" />
      </svg>
    </div>
  </section>
);

const App = () => {
  return (
    <main className="relative grid h-screen w-full grid-cols-[861fr_538fr] grid-rows-[minmax(0,1fr)] overflow-hidden bg-black">
      <EsWindow />
      <GcWindow />
      <Notepad />
    </main>
  );
};

export default App;
